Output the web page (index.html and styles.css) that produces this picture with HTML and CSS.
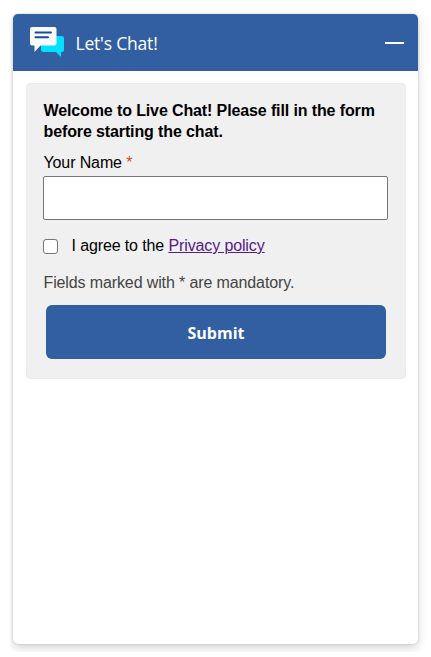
FILE: index.html
```html
<!DOCTYPE html>
<html lang="en">
<head>
<meta charset="utf-8">
<title>Let's Chat!</title>
<link rel="stylesheet" href="styles.css">
</head>
<body>
<div class="frame">
  <main class="widget">
    <header class="header">
      <svg class="logo" width="36" height="32" viewBox="0 0 36 32" aria-hidden="true">
        <path fill="#00e0ff" d="M13.500 9H32q2 0 2 2v12q0 2-2 2h-1v5l-5-5H13q-2 0-2-2V11z"/>
        <path fill="#fafafa" d="M2 0h22.500q2 0 2 2v14.500q0 2-2 2H10.500L4.500 25v-6.500H2q-2 0-2-2V2q0-2 2-2z"/>
        <path stroke="#1747a0" stroke-width="2" stroke-linecap="round" d="M5.500 5.500h15.500M5.500 10.300h12.500"/>
      </svg>
      <h1 class="title">Let's Chat!</h1>
      <button class="minimize" aria-label="Minimize"></button>
    </header>
    <form class="card">
      <p class="welcome">Welcome to Live Chat! Please fill in the form before starting the chat.</p>
      <label class="label" for="name">Your Name <span class="star">*</span></label>
      <input class="field" id="name" type="text">
      <div class="consent">
        <input class="check" id="agree" type="checkbox">
        <label for="agree">I agree to the <a class="link" href="#">Privacy policy</a></label>
      </div>
      <p class="note">Fields marked with * are mandatory.</p>
      <button class="submit" type="button">Submit</button>
    </form>
  </main>
</div>
</body>
</html>
```
FILE: styles.css
```css
* { box-sizing: border-box; }
body {
  margin: 0;
  background: #fff;
  font: 16px/21px "Liberation Sans", Arial, sans-serif;
  color: #000;
}
.frame {
  height: 652px;
  margin-left: 10px;
  padding: 14px 13px 8px 3px;
  overflow: hidden;
}
.widget {
  height: 630px;
  background: #fff;
  border-radius: 5px;
  box-shadow: 0 0 2px rgba(0, 0, 0, .2), 0 4px 10px rgba(0, 0, 0, .17);
}
.header {
  display: flex;
  align-items: center;
  height: 57px;
  padding: 0 14px 0 17px;
  border-radius: 5px 5px 0 0;
  background: #315fa2;
  color: #fff;
}
.logo { flex: none; margin-top: 1px; }
.title {
  flex: 1;
  margin: 0 0 0 9.500px;
  font: 400 17.500px/24px "Open Sans", "Noto Sans", sans-serif;
  letter-spacing: -.2px;
}
.minimize {
  width: 19px;
  height: 2px;
  padding: 0;
  border: 0;
  background: #fff;
}
.card {
  height: 296px;
  margin: 12px 12px 0 13px;
  padding: 17px 18px 0 17px;
  border-radius: 5px;
  background: #f0f0f0;
  box-shadow: inset 0 0 1px rgba(0, 0, 0, .15);
  letter-spacing: -.12px;
}
.welcome { margin: 0 0 0 .5px; font-weight: 700; }
.label { display: block; margin: 10px 0 0 .5px; }
.star { color: #c0551b; }
.field {
  display: block;
  width: 345px;
  height: 44px;
  margin: 3px 0 0;
  border: 1px solid #767676;
  border-radius: 2px;
  background: #fff;
}
.consent {
  display: flex;
  align-items: center;
  height: 21px;
  margin-top: 15px;
}
.check {
  appearance: none;
  width: 15px;
  height: 15px;
  margin: 2px 13.500px 0 0;
  border: 1px solid #767676;
  border-radius: 3px;
  background: #fff;
}
.link { color: #551a8b; }
.note { margin: 16px 0 0 .5px; color: #444; }
.submit {
  display: block;
  width: 340px;
  height: 54px;
  margin: 12px 0 0 3px;
  padding: 2px 0 0;
  border: 0;
  border-radius: 6px;
  background: #315fa2;
  color: #fff;
  font: 700 16px/24px "Open Sans", "Noto Sans", sans-serif;
}
```
